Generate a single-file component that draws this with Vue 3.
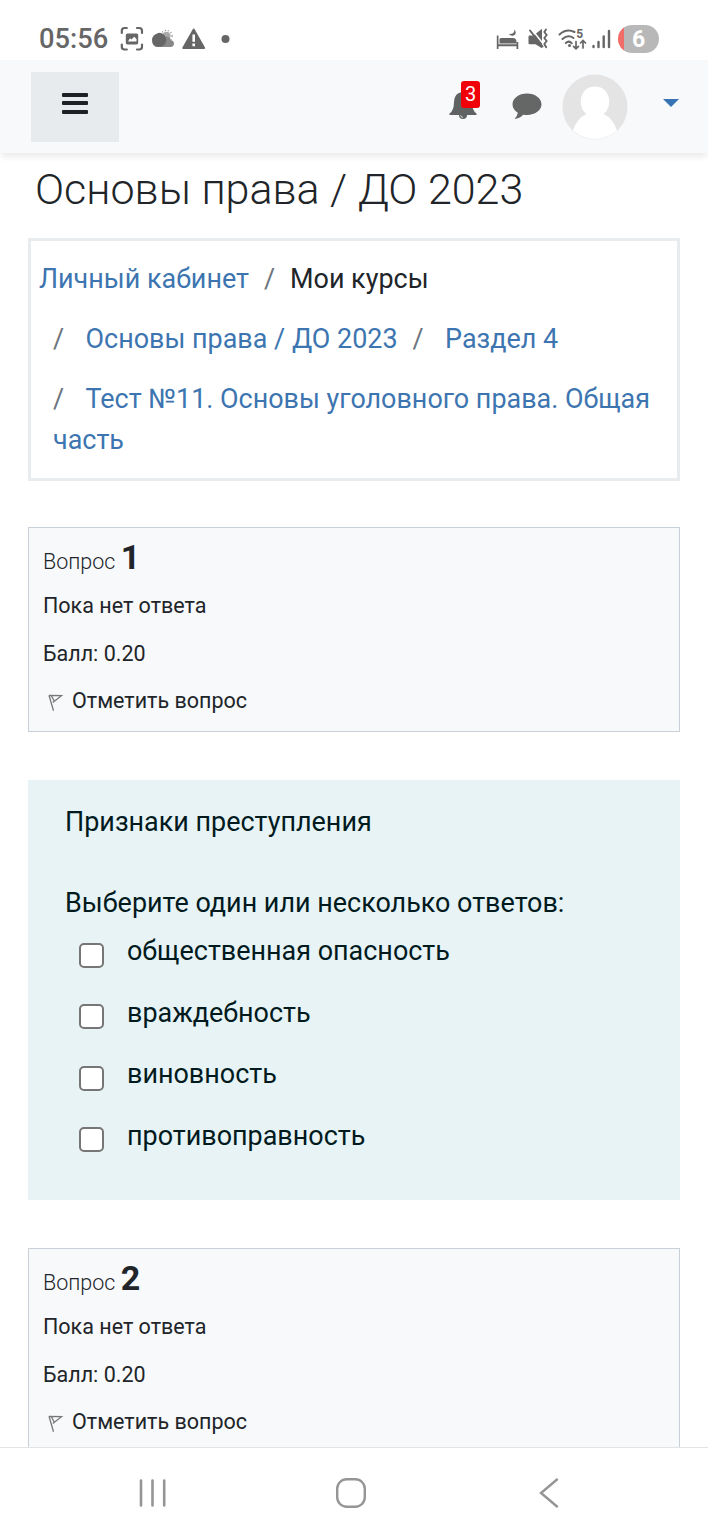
<template>
  <div class="screen">
    <div class="status-bar">
      <span class="clock">05:56</span>
      <svg class="status-left" width="114" height="32" viewBox="118 23 114 32">
        <g fill="none" stroke="#666" stroke-width="2.2" stroke-linecap="round">
          <path d="M121.8 33v-2.300q0-2.700 2.700-2.700h2.300M137 28h2.300q2.700 0 2.700 2.700V33M142 44.500v2.300q0 2.700-2.700 2.700H137M126.800 49.500h-2.300q-2.700 0-2.700-2.700v-2.300" />
        </g>
        <path fill="#666" fill-rule="evenodd" d="M127.500 33.500h9q1.700 0 1.700 1.700v7.600q0 1.700-1.700 1.700h-9q-1.700 0-1.700-1.700v-7.600q0-1.700 1.700-1.700zM128 41.500h8.500v-2.600l-2.300-2.200-2.700 2.800-1.500-1.300z" />
        <circle cx="166.500" cy="36" r="5.600" fill="none" stroke="#999" stroke-width="1.200" stroke-dasharray="1.200 1.800" />
        <circle cx="166.500" cy="36" r="4.200" fill="#aaa" />
        <path fill="#888" d="M160 47v-8l6-2.500q4 0 4.600 3.500 3.400.6 3.400 3.600 0 3.400-3.600 3.400z" />
        <path fill="#666" d="M159 32.700a7.200 7.200 0 1 1 0 14.400q-7 .2-7-6.800 0-5.800 7-7.600z" />
        <path fill="#666" d="M193.700 28.600q.7 0 1.100.8l10.200 18.200q.7 1.400-.8 1.400h-21q-1.500 0-.8-1.400l10.200-18.200q.4-.8 1.100-.8z" />
        <path stroke="#fff" stroke-width="2.600" d="M193.700 34.500v7.300M193.700 43.600v2.700" />
        <circle cx="225.500" cy="39" r="4" fill="#666" />
      </svg>
      <svg class="status-right" width="118" height="32" viewBox="494 23 118 32">
        <g fill="#666">
          <path d="M496.800 35.500h1.700v8.800h18v-2.300h1.800v7h-1.800v-2.700h-18V49h-1.700z" />
          <path d="M499.500 43.500v-4q0-1.500 1.500-1.500h12q3.500 0 3.500 4v1.500z" />
          <path d="M514.500 29.200q2.900 4.400-.8 6.200-3 .9-4.800-1.300 3.600.1 4.800-1.700.9-1.200.8-3.200z" />
          <path d="M529.500 35.500h4l8.500-6.800v19.500l-6.500-4h-6q-1 0-1-1v-6.700q0-1 1-1z" />
        </g>
        <path stroke="#fff" stroke-width="1.500" d="M531.500 29l13 16.500" />
        <path stroke="#666" stroke-width="2" stroke-linecap="round" d="M530 30.500l12.500 16" />
        <path fill="none" stroke="#666" stroke-width="1.900" stroke-linecap="round" stroke-linejoin="round" d="M546 29.500l-1.700 2.500 2.400 3-2.400 3 2.400 3-2.400 3 1.900 3.300" />
        <g fill="none" stroke="#666" stroke-width="2" stroke-linecap="round">
          <path d="M559.500 34.500q7-6.500 15-2.500M562.500 39q5.500-4.800 11-1M565.800 43q3.200-2.800 6 .3" />
          <path d="M576 41.500v7M573.500 46.300l2.500 2.500 2.500-2.500M583 48v-7M580.500 43l2.500-2.500 2.500 2.500" stroke-width="1.700" />
        </g>
        <circle cx="569.500" cy="45.500" r="1.500" fill="#666" />
        <text x="576.300" y="38" class="wifi-band">5</text>
        <path fill="none" stroke="#666" stroke-width="2.400" stroke-linecap="round" d="M593.500 46v1M598.500 42v5M603.700 36.500v10.500M609 31v16" />
      </svg>
      <span class="battery">6</span>
    </div>

    <header class="navbar">
      <button class="drawer-toggle" aria-label="Меню">
        <span></span>
        <span></span>
        <span></span>
      </button>
      <div class="nav-icons">
        <div class="bell">
          <svg width="28" height="30" viewBox="0 0 28 30">
            <path fill="#5f6362" d="M14 0q2 0 2 2.300 7 1.500 7 9.700 0 8.500 4.500 11.500v1.500H18a4 4 0 0 1-8 0H.500v-1.500Q5 20.500 5 12q0-8.200 7-9.700Q12 0 14 0z" />
            <path fill="none" stroke="#f8f9fa" stroke-width=".8" d="M11.700 25.300q.2 2 2.300 2.200" />
          </svg>
          <span class="count">3</span>
        </div>
        <svg class="chat" width="30" height="27" viewBox="0 0 30 27">
          <path fill="#646765" d="M15 .5c8.100 0 14.500 4.800 14.500 10.800S23.100 22 15 22q-2 0-3.800-.3Q7.500 25.500 2.500 26q2.800-2.700 3.300-6.300Q.5 16.500.5 11.300C.5 5.300 6.900.5 15 .5z" />
        </svg>
        <svg class="avatar" width="66" height="66" viewBox="0 0 66 66">
          <circle cx="33" cy="33" r="32.500" fill="#e4e4e4" />
          <path fill="#fff" d="M33 12.500c8 0 14.200 6 14.200 14.500 0 6-2 10.500-5.700 13Q51 44 55 56.500A32.500 32.500 0 0 1 11 56.500Q15 44 24.500 40c-3.700-2.500-5.700-7-5.700-13 0-8.500 6.200-14.500 14.200-14.500z" />
        </svg>
        <svg class="caret" width="16" height="8" viewBox="0 0 16 8">
          <path fill="#3873b3" d="M0 0h16L8 8z" />
        </svg>
      </div>
    </header>

    <main class="page">
      <h1>Основы права / ДО 2023</h1>

      <nav class="breadcrumbs">
        <div class="crumb-row first">
          <a>Личный кабинет</a><i>/</i><span>Мои курсы</span>
        </div>
        <div class="crumb-row">
          <i>/</i><a>Основы права / ДО 2023</a><i>/</i><a>Раздел 4</a>
        </div>
        <div class="crumb-row">
          <i>/</i><a>Тест №11. Основы уголовного права. Общая часть</a>
        </div>
      </nav>

      <template v-for="question in questions" :key="question.number">
        <section class="info">
          <h3>Вопрос <b>{{ question.number }}</b></h3>
          <div class="state">Пока нет ответа</div>
          <div class="grade">Балл: {{ question.grade }}</div>
          <div class="flag">
            <svg width="16" height="18" viewBox="0 0 16 18">
              <path fill="none" stroke="#777" stroke-width="1.300" d="M1 1.300l4.500 15.500M1 1.300l12.500.4-8.700 6.700M3.200 1.500l3 5.500" />
            </svg>
            <span>Отметить вопрос</span>
          </div>
        </section>

        <section v-if="question.text" class="formulation">
          <p class="qtext">{{ question.text }}</p>
          <p class="prompt">Выберите один или несколько ответов:</p>
          <label v-for="answer in question.answers" :key="answer" class="answer">
            <input type="checkbox" />
            <span>{{ answer }}</span>
          </label>
        </section>
      </template>
    </main>

    <footer class="system-nav">
      <svg width="28" height="30" viewBox="0 0 28 30">
        <path stroke="#959595" stroke-width="2.600" stroke-linecap="round" d="M2 2.500v25M13.500 2.500v25M25.200 2.500v25" />
      </svg>
      <svg class="home" width="32" height="32" viewBox="0 0 32 32">
        <rect x="2.200" y="2.200" width="27.600" height="27.600" rx="9.500" fill="none" stroke="#959595" stroke-width="2.400" />
      </svg>
      <svg width="20" height="32" viewBox="0 0 20 32">
        <path fill="none" stroke="#959595" stroke-width="2.400" stroke-linecap="round" d="M18 2.500L2 16l16 13.500" />
      </svg>
    </footer>
  </div>
</template>

<script setup>
const questions = [
  {
    number: 1,
    grade: '0.20',
    text: 'Признаки преступления',
    answers: ['общественная опасность', 'враждебность', 'виновность', 'противоправность']
  },
  {
    number: 2,
    grade: '0.20'
  }
]
</script>

<style>
body {
  background: #fff;
}
</style>

<style scoped>
* {
  box-sizing: border-box;
}

.screen {
  display: flex;
  flex-direction: column;
  width: 708px;
  height: 1536px;
  overflow: hidden;
  background: #fff;
  color: #212529;
  font-family: Roboto, sans-serif;
  font-size: 26.95px;
  line-height: 41px;
}

.status-bar {
  display: flex;
  flex: none;
  align-items: center;
  height: 60px;
  padding: 18px 49px 0 39px;
}

.clock {
  width: 79px;
  padding-top: 1px;
  color: #666;
  font-size: 27.3px;
  font-weight: 500;
  white-space: nowrap;
}

.status-right {
  margin-left: auto;
}

.wifi-band {
  fill: #666;
  font-size: 12px;
  font-weight: 700;
}

.battery {
  width: 41px;
  height: 28px;
  margin-left: 6px;
  border-radius: 14px;
  background: linear-gradient(90deg, #f26c68 6px, #b8b8b8 6px);
  color: #fff;
  font-size: 23px;
  font-weight: 700;
  line-height: 29px;
  text-align: center;
}

.navbar {
  display: flex;
  flex: none;
  align-items: center;
  justify-content: space-between;
  height: 93px;
  padding: 0 29px 0 31px;
  background: #f8f9fb;
  box-shadow: 0 5px 6px -1px rgba(0, 0, 0, 0.08);
}

.drawer-toggle {
  display: flex;
  flex-direction: column;
  align-items: center;
  gap: 4.5px;
  width: 88px;
  height: 70px;
  padding: 21px 0 0;
  border: 0;
  background: #e8ebed;
}

.drawer-toggle span {
  width: 26px;
  height: 4px;
  border-radius: 1px;
  background: #1d2125;
}

.nav-icons {
  display: flex;
  align-items: center;
}

.bell {
  position: relative;
  height: 30px;
  margin: -4px 35px 0 0;
}

.bell svg,
.chat,
.avatar,
.caret {
  display: block;
}

.count {
  position: absolute;
  top: -9px;
  left: 12px;
  width: 19px;
  height: 27px;
  border-radius: 3px;
  background: #f00008;
  color: #fff;
  font-size: 20px;
  line-height: 27px;
  text-align: center;
}

.chat {
  margin: -1px 20px 0 0;
}

.avatar {
  margin-right: 35px;
}

.caret {
  margin-top: -7px;
}

.page {
  flex: 1;
  min-height: 0;
  padding: 11px 28px 0;
  overflow: hidden;
}

h1 {
  margin: 0 0 24px 7px;
  font-size: 43px;
  font-weight: 300;
  line-height: 50px;
  white-space: nowrap;
}

.breadcrumbs {
  height: 243px;
  margin-bottom: 46px;
  padding: 18px 8px 0;
  border: 3px solid #e9ecee;
}

.crumb-row {
  margin-bottom: 19px;
  padding-left: 14px;
}

.crumb-row.first {
  padding-left: 0;
}

.crumb-row a {
  color: #3d75b0;
}

.crumb-row i {
  display: inline-block;
  width: 32.5px;
  color: #6c757d;
  font-style: normal;
}

.crumb-row a + i {
  box-sizing: content-box;
  padding-left: 15px;
}

.first a + i {
  width: 26px;
}

.info {
  height: 205px;
  margin-bottom: 48px;
  padding: 6px 14px;
  border: 1px solid #cad0d7;
  background: #f8f9fb;
  font-size: 21.5px;
  line-height: 34px;
}

.info h3 {
  height: 55px;
  margin: 0;
  font-size: 21.5px;
  font-weight: 300;
  line-height: 47px;
}

.info h3 b {
  font-size: 34px;
  font-weight: 700;
}

.state {
  margin-bottom: 14px;
}

.grade {
  margin-bottom: 13px;
}

.flag {
  display: flex;
  align-items: center;
}

.flag svg {
  margin: 3px 8px 0 5px;
}

.formulation {
  height: 420px;
  margin-bottom: 48px;
  padding: 22px 37px;
  background: #e7f3f5;
  color: #001a1e;
}

.formulation p {
  margin: 0;
}

.formulation .qtext {
  margin-bottom: 40px;
}

.answer {
  display: flex;
  align-items: center;
  height: 41px;
  margin: 7px 0 20.500px 14px;
}

.answer + .answer {
  margin-top: 0;
}

.answer input {
  appearance: none;
  width: 25px;
  height: 25px;
  margin: 7px 23px 0 0;
  border: 2px solid #767676;
  border-radius: 5px;
  background: #fff;
}

.system-nav {
  display: flex;
  flex: none;
  align-items: center;
  justify-content: space-between;
  height: 89px;
  padding: 2px 149px 0 139px;
  border-top: 1px solid #e2e3e4;
  background: #fff;
}

.home {
  margin-right: 5px;
}
</style>
